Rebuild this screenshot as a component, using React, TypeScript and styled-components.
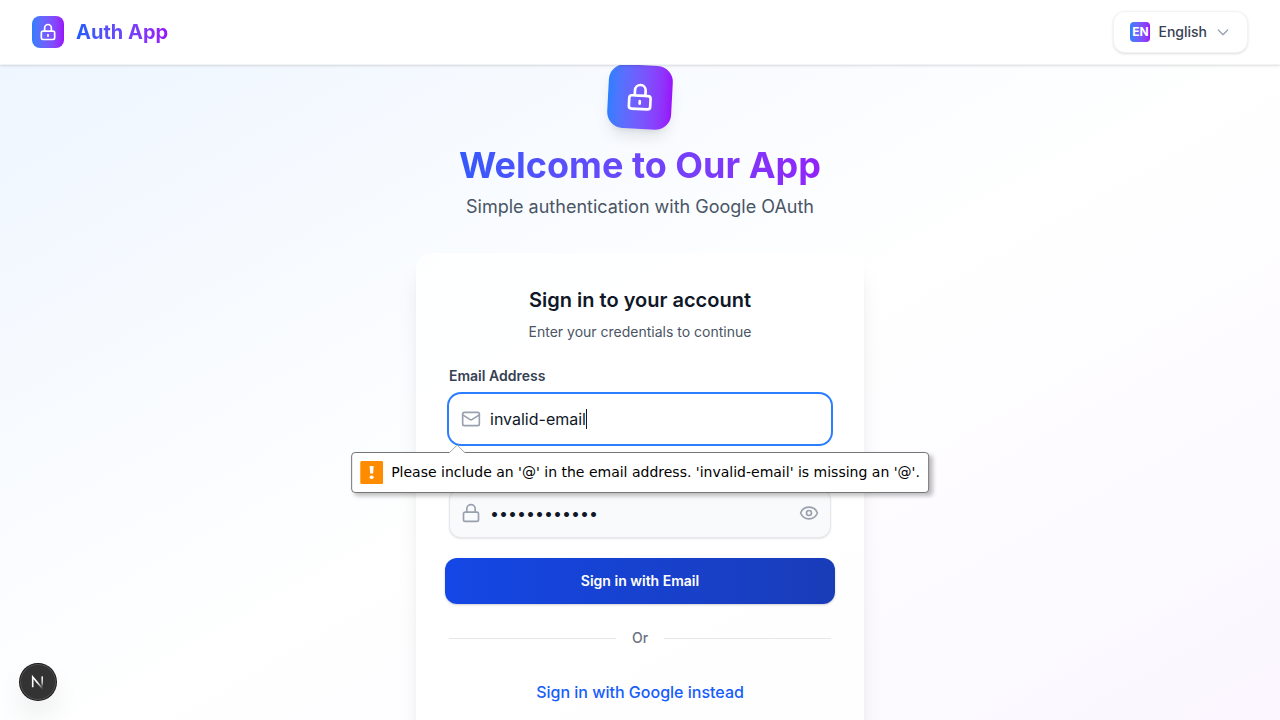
import React, { useState } from "react";
import styled, { createGlobalStyle } from "styled-components";
import { Eye, Lock, Mail } from "lucide-react";

const GlobalStyle = createGlobalStyle`
  *, *::before, *::after { box-sizing: border-box; }
  body {
    margin: 0;
    font-family: Inter, "Liberation Sans", sans-serif;
    color: #101828;
  }
  h1, h2, p { margin: 0; }
  button, input { font: inherit; color: inherit; }
`;

const brandGradient = "linear-gradient(to right in oklab, #155dfc, #9810fa)";
const tileGradient = "linear-gradient(to right in oklab, #2b7fff, #9810fa)";

const Page = styled.div`
  min-height: 100vh;
`;

const Header = styled.header`
  position: sticky;
  top: 0;
  z-index: 10;
  display: flex;
  align-items: center;
  justify-content: space-between;
  height: 65px;
  padding: 0 32px;
  background: rgba(255, 255, 255, 0.95);
  border-bottom: 1px solid rgba(229, 231, 235, 0.5);
  box-shadow: 0 1px 3px rgba(0, 0, 0, 0.1), 0 1px 2px -1px rgba(0, 0, 0, 0.1);
`;

const Brand = styled.div`
  display: flex;
  align-items: center;
  gap: 12px;
`;

const Tile = styled.div<{ $large?: boolean }>`
  display: flex;
  align-items: center;
  justify-content: center;
  flex: none;
  width: ${(p) => (p.$large ? 64 : 32)}px;
  height: ${(p) => (p.$large ? 64 : 32)}px;
  border-radius: ${(p) => (p.$large ? 16 : 8)}px;
  background: ${tileGradient};
  color: #ffffff;
  ${(p) =>
    p.$large &&
    `
    transform: rotate(3deg);
    box-shadow: 0 10px 15px -3px rgba(0, 0, 0, 0.1), 0 4px 6px -4px rgba(0, 0, 0, 0.1);
  `}
`;

const BrandName = styled.span`
  font-size: 20px;
  line-height: 28px;
  font-weight: 700;
  color: transparent;
  background: ${brandGradient};
  background-clip: text;
`;

const LanguageButton = styled.button`
  display: flex;
  align-items: center;
  gap: 8px;
  padding: 10px 16px;
  border: 1px solid rgba(229, 231, 235, 0.5);
  border-radius: 12px;
  background: #ffffff;
  box-shadow: 0 1px 3px rgba(0, 0, 0, 0.1), 0 1px 2px -1px rgba(0, 0, 0, 0.1);
  font-size: 14px;
  line-height: 20px;
  font-weight: 500;
  color: #364153;
  cursor: pointer;
`;

const LanguageCode = styled.span`
  display: flex;
  align-items: center;
  justify-content: center;
  width: 20px;
  height: 20px;
  border-radius: 4px;
  background: ${tileGradient};
  color: #ffffff;
  font-size: 12px;
  line-height: 16px;
  font-weight: 700;
`;

const Main = styled.main`
  display: flex;
  flex-direction: column;
  align-items: center;
  padding: 0 16px 48px;
  background: linear-gradient(to bottom right in oklab, #eff6ff, #ffffff, #faf5ff);
`;

const Hero = styled.section`
  display: flex;
  flex-direction: column;
  align-items: center;
  width: 100%;
  max-width: 448px;
  margin-bottom: 32px;
  text-align: center;
`;

const HeroTitle = styled.h1`
  width: 100%;
  margin: 16px 0 8px;
  font-size: 36px;
  line-height: 40px;
  font-weight: 700;
  color: transparent;
  background: ${brandGradient};
  background-clip: text;
`;

const HeroText = styled.p`
  font-size: 18px;
  line-height: 28px;
  color: #4a5565;
`;

const Card = styled.section`
  width: 100%;
  max-width: 448px;
  padding: 32px;
  border: 1px solid rgba(255, 255, 255, 0.2);
  border-radius: 16px;
  background: rgba(255, 255, 255, 0.8);
  box-shadow: 0 20px 25px -5px rgba(0, 0, 0, 0.1), 0 8px 10px -6px rgba(0, 0, 0, 0.1);
`;

const CardHeading = styled.div`
  text-align: center;
  margin-bottom: 24px;
`;

const CardTitle = styled.h2`
  margin-bottom: 8px;
  font-size: 20px;
  line-height: 28px;
  font-weight: 600;
`;

const CardText = styled.p`
  font-size: 14px;
  line-height: 20px;
  color: #4a5565;
`;

const Form = styled.form`
  display: flex;
  flex-direction: column;
  gap: 16px;
`;

const Field = styled.div`
  display: flex;
  flex-direction: column;
  gap: 8px;
`;

const Label = styled.label`
  font-size: 14px;
  line-height: 20px;
  font-weight: 600;
  color: #364153;
`;

const Caret = styled.span`
  display: none;
  width: 1px;
  height: 20px;
  background: #101828;
`;

const InputBox = styled.div`
  position: relative;
  display: flex;
  align-items: center;
  height: 50px;
  padding: 0 11px;
  border: 1px solid #e5e7eb;
  border-radius: 12px;
  background: #f9fafb;
  color: #99a1af;
  box-shadow: 0 1px 2px rgba(0, 0, 0, 0.1);
  svg { flex: none; }
  &:focus-within {
    border-color: transparent;
    background: #ffffff;
    box-shadow: 0 0 0 2px #2b7fff;
  }
  &:focus-within ${Caret} { display: block; }
`;

const Input = styled.input<{ $hug?: boolean }>`
  flex: ${(p) => (p.$hug ? "0 1 auto" : "1")};
  field-sizing: ${(p) => (p.$hug ? "content" : "fixed")};
  caret-color: ${(p) => (p.$hug ? "transparent" : "auto")};
  min-width: 0;
  margin-left: 9px;
  padding: 0;
  border: 0;
  outline: 0;
  background: transparent;
  font-size: 16px;
  line-height: 24px;
  color: #101828;
`;

const IconButton = styled.button`
  display: flex;
  padding: 0;
  border: 0;
  background: none;
  color: #99a1af;
  cursor: pointer;
`;

const Bubble = styled.div`
  position: absolute;
  z-index: 5;
  top: 57px;
  left: 50%;
  transform: translateX(-50%);
  display: flex;
  align-items: center;
  gap: 8px;
  height: 41px;
  padding: 0 8px;
  border: 1px solid #757575;
  border-radius: 4px;
  background: #ffffff;
  box-shadow: 3px 3px 4px rgba(0, 0, 0, 0.25);
  font-family: "DejaVu Sans", sans-serif;
  font-size: 14px;
  line-height: 18px;
  color: #000000;
  white-space: nowrap;
`;

const BubbleText = styled.span`
  padding-bottom: 2px;
`;

const BubbleArrow = styled.svg`
  position: absolute;
  top: -9px;
  left: 96px;
`;

const SubmitButton = styled.button`
  height: 46px;
  margin: 4px -4px 0;
  border: 0;
  border-radius: 12px;
  background: linear-gradient(to right in oklab, #1447e6, #193cb8);
  box-shadow: 0 1px 3px rgba(0, 0, 0, 0.1), 0 1px 2px rgba(0, 0, 0, 0.1);
  color: #ffffff;
  font-size: 14px;
  line-height: 20px;
  font-weight: 600;
  cursor: pointer;
`;

const Divider = styled.div`
  display: flex;
  align-items: center;
  gap: 16px;
  margin: 24px 0 32px;
  font-size: 14px;
  line-height: 20px;
  font-weight: 500;
  color: #6a7282;
  &::before, &::after {
    content: "";
    flex: 1;
    height: 1px;
    background: #e5e7eb;
  }
`;

const AltLink = styled.a`
  display: block;
  text-align: center;
  font-size: 16px;
  line-height: 24px;
  font-weight: 500;
  color: #155dfc;
  text-decoration: none;
`;

const DevButton = styled.button`
  position: fixed;
  left: 20px;
  bottom: 20px;
  display: flex;
  align-items: center;
  justify-content: center;
  width: 36px;
  height: 36px;
  padding: 0;
  border: 0;
  border-radius: 50%;
  background: #333333;
  box-shadow: 0 0 0 1px #171717, inset 0 0 0 1px rgba(255, 255, 255, 0.14),
    0 16px 32px -8px rgba(0, 0, 0, 0.24);
  cursor: pointer;
`;

function PadlockIcon({ size }: { size: number }) {
  return (
    <svg width={size} height={size} viewBox="0 0 24 24" fill="none" stroke="currentColor" strokeWidth="2" strokeLinecap="round" strokeLinejoin="round" aria-hidden="true">
      <path d="M12 15v2m-6 4h12a2 2 0 002-2v-6a2 2 0 00-2-2H6a2 2 0 00-2 2v6a2 2 0 002 2zm10-10V7a4 4 0 00-8 0v4h8z" />
    </svg>
  );
}

function ChevronIcon() {
  return (
    <svg width="16" height="16" viewBox="0 0 24 24" fill="none" stroke="#99a1af" strokeWidth="2" strokeLinecap="round" strokeLinejoin="round" aria-hidden="true">
      <path d="M19 9l-7 7-7-7" />
    </svg>
  );
}

function ValidationBubble({ text }: { text: string }) {
  return (
    <Bubble role="alert">
      <BubbleArrow width="18" height="10" viewBox="0 0 18 10" aria-hidden="true">
        <path d="M1 9 L9 1 L17 9 V10 H1 Z" fill="#ffffff" />
        <path d="M1 9 L9 1 L17 9" fill="none" stroke="#a6a6a6" />
      </BubbleArrow>
      <svg width="23" height="23" viewBox="0 0 23 23" aria-hidden="true">
        <rect width="23" height="23" rx="1.5" fill="#ff8c00" />
        <path d="M9.5 5H13.5L13 12.5H10Z" fill="#ffffff" />
        <rect x="9.5" y="14.5" width="4" height="3.5" rx="1.7" fill="#ffffff" />
      </svg>
      <BubbleText>{text}</BubbleText>
    </Bubble>
  );
}

function NextMark() {
  return (
    <svg width="16" height="16" viewBox="0 0 16 16" fill="none" aria-hidden="true">
      <defs>
        <linearGradient id="stem" x1="0" y1="2" x2="0" y2="13" gradientUnits="userSpaceOnUse">
          <stop stopColor="#fff" />
          <stop offset="0.6" stopColor="#fff" stopOpacity="0.7" />
          <stop offset="1" stopColor="#fff" stopOpacity="0" />
        </linearGradient>
        <linearGradient id="slash" x1="8" y1="8" x2="13" y2="14" gradientUnits="userSpaceOnUse">
          <stop stopColor="#fff" />
          <stop offset="1" stopColor="#fff" stopOpacity="0.1" />
        </linearGradient>
      </defs>
      <path d="M2.7 13.2 V3 L12.8 15" stroke="url(#slash)" strokeWidth="1.6" />
      <rect x="11.4" y="2.4" width="1.6" height="10.6" fill="url(#stem)" />
    </svg>
  );
}

export default function App() {
  const [email, setEmail] = useState("invalid-email");
  const [password, setPassword] = useState("password1234");
  const [visible, setVisible] = useState(false);
  const missingAt = email !== "" && !email.includes("@");

  return (
    <>
      <GlobalStyle />
      <Page>
        <Header>
          <Brand>
            <Tile><PadlockIcon size={20} /></Tile>
            <BrandName>Auth App</BrandName>
          </Brand>
          <LanguageButton type="button">
            <LanguageCode>EN</LanguageCode>
            <span>English</span>
            <ChevronIcon />
          </LanguageButton>
        </Header>
        <Main>
          <Hero>
            <Tile $large><PadlockIcon size={32} /></Tile>
            <HeroTitle>Welcome to Our App</HeroTitle>
            <HeroText>Simple authentication with Google OAuth</HeroText>
          </Hero>
          <Card>
            <CardHeading>
              <CardTitle>Sign in to your account</CardTitle>
              <CardText>Enter your credentials to continue</CardText>
            </CardHeading>
            <Form noValidate onSubmit={(e) => e.preventDefault()}>
              <Field>
                <Label htmlFor="email">Email Address</Label>
                <InputBox>
                  <Mail size={20} />
                  <Input $hug id="email" type="email" autoFocus value={email} onChange={(e) => setEmail(e.target.value)} />
                  <Caret />
                  {missingAt && (
                    <ValidationBubble text={`Please include an '@' in the email address. '${email}' is missing an '@'.`} />
                  )}
                </InputBox>
              </Field>
              <Field>
                <Label htmlFor="password">Password</Label>
                <InputBox>
                  <Lock size={20} />
                  <Input id="password" type={visible ? "text" : "password"} value={password} onChange={(e) => setPassword(e.target.value)} />
                  <IconButton type="button" aria-label="Show password" onClick={() => setVisible(!visible)}>
                    <Eye size={20} />
                  </IconButton>
                </InputBox>
              </Field>
              <SubmitButton type="submit">Sign in with Email</SubmitButton>
            </Form>
            <Divider>Or</Divider>
            <AltLink href="#google">Sign in with Google instead</AltLink>
          </Card>
        </Main>
        <DevButton type="button" aria-label="Open developer tools"><NextMark /></DevButton>
      </Page>
    </>
  );
}
